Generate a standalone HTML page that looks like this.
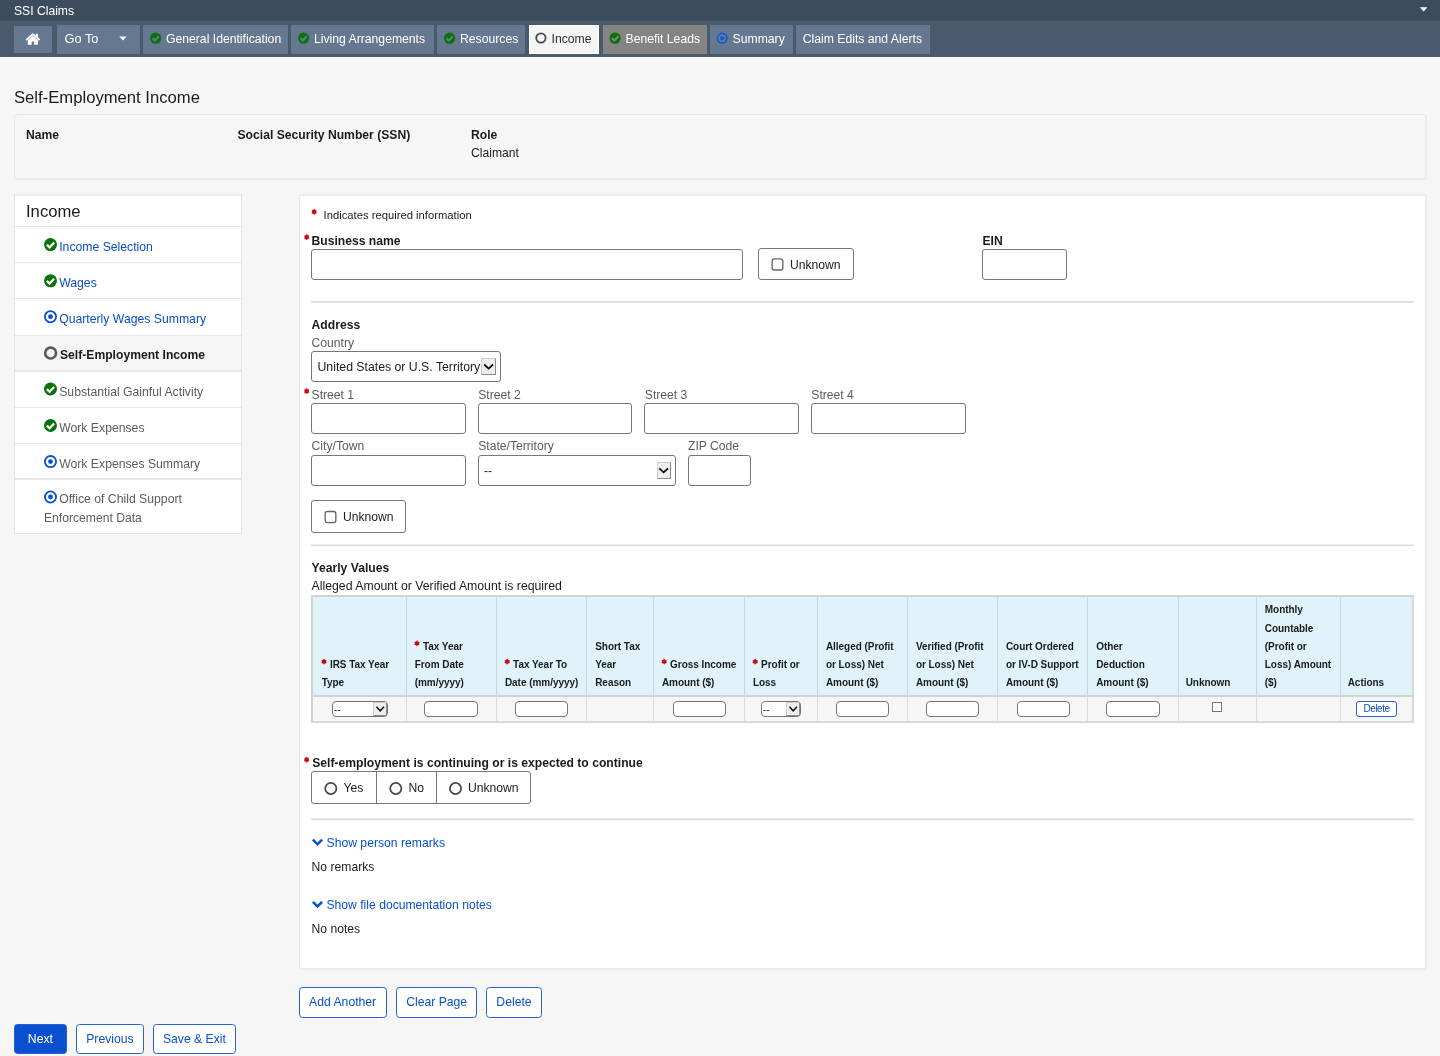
<!DOCTYPE html>
<html lang="en"><head><meta charset="utf-8"><title>SSI Claims - Self-Employment Income</title>
<style>
*{box-sizing:border-box}
html,body{margin:0;padding:0}
body{width:1440px;height:1056px;overflow:hidden;background:#f6f6f6;font-family:"Liberation Sans",Arial,sans-serif;font-size:12.15px;color:#1b1b1b;position:relative}
.a{position:absolute}
.t{position:absolute;white-space:nowrap}
#w{position:absolute;left:0;top:0;width:1440px;height:1056px;will-change:transform}
</style></head><body><div id="w">
<div class="a " style="left:0px;top:0px;width:1440px;height:21px;background:#3d4c5d"></div>
<div class="t" style="left:14px;top:1px;font-size:12.15px;line-height:20px;font-weight:400;color:#fff;">SSI Claims</div>
<svg class="a" style="left:1419px;top:7px" width="10" height="6" viewBox="0 0 10 6"><g transform="translate(0.60 0.00) scale(0.8000 0.7667)"><path d="M0.3 0.3 H9.7 L5 5.8 Z" fill="#fff"/></g></svg>
<div class="a " style="left:0px;top:21px;width:1440px;height:36px;background:#495a6c"></div>
<div class="a " style="left:14px;top:25.9px;width:38.2px;height:27px;background:#66788f"></div>
<svg class="a" style="left:25px;top:33px" width="17" height="13" viewBox="0 0 17 13"><g transform="translate(0.60 0.10) scale(0.5214 0.5318)"><path d="M14 0 L0 11.6 L2.2 14.4 L14 4.6 L25.8 14.4 L28 11.6 L23.6 7.9 V1.4 H19.4 V4.5 Z" fill="#fff"/><path d="M14 5.5 L4.2 13.6 V22 H11.6 V15.6 H16.4 V22 H23.8 V13.6 Z" fill="#fff"/></g></svg>
<div class="a " style="left:57px;top:25px;width:83px;height:29px;background:#66788f"></div>
<div class="t" style="left:64.6px;top:29px;font-size:12.75px;line-height:20px;font-weight:400;color:#fff;">Go To</div>
<svg class="a" style="left:118px;top:36px" width="10" height="6" viewBox="0 0 10 6"><g transform="translate(0.90 0.20) scale(0.8000 0.7500)"><path d="M0.3 0.3 H9.7 L5 5.8 Z" fill="#fff"/></g></svg>
<div class="a " style="left:143px;top:25px;width:145.3px;height:29px;background:#66788f"></div>
<svg class="a" style="left:150px;top:32px" width="13" height="13" viewBox="0 0 13 13"><g transform="translate(0.00 0.60) scale(0.5600 0.5600)"><circle cx="10" cy="10" r="10" fill="#0a720a"/><path d="M4.4 10.2 L8.5 14.2 L15.6 6.9" fill="none" stroke="#66788f" stroke-width="3.5"/></g></svg>
<div class="t" style="left:166px;top:29px;font-size:12.2px;line-height:20px;font-weight:400;color:#fff;">General Identification</div>
<div class="a " style="left:291px;top:25px;width:143px;height:29px;background:#66788f"></div>
<svg class="a" style="left:298px;top:32px" width="13" height="13" viewBox="0 0 13 13"><g transform="translate(0.00 0.60) scale(0.5600 0.5600)"><circle cx="10" cy="10" r="10" fill="#0a720a"/><path d="M4.4 10.2 L8.5 14.2 L15.6 6.9" fill="none" stroke="#66788f" stroke-width="3.5"/></g></svg>
<div class="t" style="left:314px;top:29px;font-size:12.2px;line-height:20px;font-weight:400;color:#fff;">Living Arrangements</div>
<div class="a " style="left:437px;top:25px;width:88px;height:29px;background:#66788f"></div>
<svg class="a" style="left:444px;top:32px" width="13" height="13" viewBox="0 0 13 13"><g transform="translate(0.00 0.60) scale(0.5600 0.5600)"><circle cx="10" cy="10" r="10" fill="#0a720a"/><path d="M4.4 10.2 L8.5 14.2 L15.6 6.9" fill="none" stroke="#66788f" stroke-width="3.5"/></g></svg>
<div class="t" style="left:460px;top:29px;font-size:12.2px;line-height:20px;font-weight:400;color:#fff;">Resources</div>
<div class="a " style="left:528.5px;top:25px;width:70.3px;height:29px;background:#f5f5f5;border:1.5px solid #fff"></div>
<svg class="a" style="left:535px;top:32px" width="13" height="13" viewBox="0 0 13 13"><g transform="translate(0.30 0.40) scale(0.5600 0.5600)"><circle cx="10" cy="10" r="8.35" fill="none" stroke="#4c4c4c" stroke-width="3.3"/></g></svg>
<div class="t" style="left:551.5px;top:29px;font-size:12.2px;line-height:20px;font-weight:400;color:#2e2e2e;">Income</div>
<div class="a " style="left:602.5px;top:25px;width:104.2px;height:29px;background:#848484"></div>
<svg class="a" style="left:609px;top:32px" width="13" height="13" viewBox="0 0 13 13"><g transform="translate(0.50 0.60) scale(0.5600 0.5600)"><circle cx="10" cy="10" r="10" fill="#0a720a"/><path d="M4.4 10.2 L8.5 14.2 L15.6 6.9" fill="none" stroke="#848484" stroke-width="3.5"/></g></svg>
<div class="t" style="left:625.5px;top:29px;font-size:12.2px;line-height:20px;font-weight:400;color:#fff;">Benefit Leads</div>
<div class="a " style="left:709.6px;top:25px;width:83.1px;height:29px;background:#66788f"></div>
<svg class="a" style="left:716px;top:32px" width="13" height="13" viewBox="0 0 13 13"><g transform="translate(0.60 0.60) scale(0.5600 0.5600)"><circle cx="10" cy="10" r="8.6" fill="#66788f" stroke="#0b5be0" stroke-width="2.8"/><circle cx="10" cy="10" r="3.7" fill="#0b5be0"/></g></svg>
<div class="t" style="left:732.6px;top:29px;font-size:12.2px;line-height:20px;font-weight:400;color:#fff;">Summary</div>
<div class="a " style="left:795.8px;top:25px;width:134.2px;height:29px;background:#66788f"></div>
<div class="t" style="left:802.8px;top:29px;font-size:12.2px;line-height:20px;font-weight:400;color:#fff;">Claim Edits and Alerts</div>
<div class="t" style="left:14px;top:88px;font-size:16.65px;line-height:20px;font-weight:400;color:#1b1b1b;">Self-Employment Income</div>
<div class="a " style="left:14px;top:114px;width:1413px;height:66px;border:solid;border-width:1px 2px 2px 1px;border-color:#e5e5e5 #ececec #ebebeb #e7e7e7;border-radius:3px;background:#f6f6f6"></div>
<div class="t" style="left:26px;top:125px;font-size:12.15px;line-height:20px;font-weight:700;color:#1b1b1b;">Name</div>
<div class="t" style="left:237.5px;top:125px;font-size:12.15px;line-height:20px;font-weight:700;color:#1b1b1b;">Social Security Number (SSN)</div>
<div class="t" style="left:471px;top:125px;font-size:12.15px;line-height:20px;font-weight:700;color:#1b1b1b;">Role</div>
<div class="t" style="left:471px;top:143px;font-size:12.15px;line-height:20px;font-weight:400;color:#1b1b1b;">Claimant</div>
<div class="a " style="left:14px;top:194px;width:228px;height:340px;border:solid;border-width:2px 1px 1px 1px;border-color:#ececec #e6e6e6 #e6e6e6 #e6e6e6;background:#fff"></div>
<div class="t" style="left:26px;top:202px;font-size:16.65px;line-height:20px;font-weight:400;color:#1b1b1b;">Income</div>
<div class="a " style="left:15px;top:335.5px;width:226px;height:35.5px;background:#f5f5f5"></div>
<div class="a " style="left:15px;top:225.65px;width:226px;height:1.5px;background:#e6e6e6"></div>
<div class="a " style="left:15px;top:261.85px;width:226px;height:1.5px;background:#e6e6e6"></div>
<div class="a " style="left:15px;top:297.75px;width:226px;height:1.5px;background:#e6e6e6"></div>
<div class="a " style="left:15px;top:334.55px;width:226px;height:1.5px;background:#e6e6e6"></div>
<div class="a " style="left:15px;top:370.05px;width:226px;height:1.5px;background:#e6e6e6"></div>
<div class="a " style="left:15px;top:406.55px;width:226px;height:1.5px;background:#e6e6e6"></div>
<div class="a " style="left:15px;top:442.65px;width:226px;height:1.5px;background:#e6e6e6"></div>
<div class="a " style="left:15px;top:478.05px;width:226px;height:1.5px;background:#e6e6e6"></div>
<svg class="a" style="left:44px;top:238px" width="14" height="15" viewBox="0 0 14 15"><g transform="translate(0.00 0.10) scale(0.6500 0.6500)"><circle cx="10" cy="10" r="10" fill="#0a720a"/><path d="M4.4 10.2 L8.5 14.2 L15.6 6.9" fill="none" stroke="#fff" stroke-width="3.5"/></g></svg>
<div class="t" style="left:59.2px;top:237px;font-size:12.22px;line-height:20px;font-weight:400;color:#0a4fcf;">Income Selection</div>
<svg class="a" style="left:44px;top:274px" width="14" height="15" viewBox="0 0 14 15"><g transform="translate(0.00 0.30) scale(0.6500 0.6500)"><circle cx="10" cy="10" r="10" fill="#0a720a"/><path d="M4.4 10.2 L8.5 14.2 L15.6 6.9" fill="none" stroke="#fff" stroke-width="3.5"/></g></svg>
<div class="t" style="left:59.2px;top:273px;font-size:12.22px;line-height:20px;font-weight:400;color:#0a4fcf;">Wages</div>
<svg class="a" style="left:44px;top:310px" width="14" height="15" viewBox="0 0 14 15"><g transform="translate(0.00 0.20) scale(0.6500 0.6500)"><circle cx="10" cy="10" r="8.6" fill="#fff" stroke="#0a4fcf" stroke-width="2.8"/><circle cx="10" cy="10" r="3.7" fill="#0a4fcf"/></g></svg>
<div class="t" style="left:59.2px;top:309px;font-size:12.22px;line-height:20px;font-weight:400;color:#0a4fcf;">Quarterly Wages Summary</div>
<svg class="a" style="left:43px;top:346px" width="16" height="15" viewBox="0 0 16 15"><g transform="translate(0.85 0.35) scale(0.6750 0.6750)"><circle cx="10" cy="10" r="8.05" fill="none" stroke="#585858" stroke-width="3.9"/></g></svg>
<div class="t" style="left:60px;top:345px;font-size:12.15px;line-height:20px;font-weight:700;color:#1b1b1b;">Self-Employment Income</div>
<svg class="a" style="left:44px;top:382px" width="14" height="15" viewBox="0 0 14 15"><g transform="translate(0.00 0.50) scale(0.6500 0.6500)"><circle cx="10" cy="10" r="10" fill="#0a720a"/><path d="M4.4 10.2 L8.5 14.2 L15.6 6.9" fill="none" stroke="#fff" stroke-width="3.5"/></g></svg>
<div class="t" style="left:59.2px;top:382px;font-size:12.22px;line-height:20px;font-weight:400;color:#5c5c5c;">Substantial Gainful Activity</div>
<svg class="a" style="left:44px;top:419px" width="14" height="14" viewBox="0 0 14 14"><g transform="translate(0.00 0.00) scale(0.6500 0.6500)"><circle cx="10" cy="10" r="10" fill="#0a720a"/><path d="M4.4 10.2 L8.5 14.2 L15.6 6.9" fill="none" stroke="#fff" stroke-width="3.5"/></g></svg>
<div class="t" style="left:59.2px;top:418px;font-size:12.22px;line-height:20px;font-weight:400;color:#5c5c5c;">Work Expenses</div>
<svg class="a" style="left:44px;top:455px" width="14" height="15" viewBox="0 0 14 15"><g transform="translate(0.00 0.10) scale(0.6500 0.6500)"><circle cx="10" cy="10" r="8.6" fill="#fff" stroke="#0a4fcf" stroke-width="2.8"/><circle cx="10" cy="10" r="3.7" fill="#0a4fcf"/></g></svg>
<div class="t" style="left:59.2px;top:454px;font-size:12.22px;line-height:20px;font-weight:400;color:#5c5c5c;">Work Expenses Summary</div>
<svg class="a" style="left:44px;top:490px" width="14" height="15" viewBox="0 0 14 15"><g transform="translate(0.00 0.50) scale(0.6500 0.6500)"><circle cx="10" cy="10" r="8.6" fill="#fff" stroke="#0a4fcf" stroke-width="2.8"/><circle cx="10" cy="10" r="3.7" fill="#0a4fcf"/></g></svg>
<div class="t" style="left:59.2px;top:489px;font-size:12.22px;line-height:20px;font-weight:400;color:#5c5c5c;">Office of Child Support</div>
<div class="t" style="left:44px;top:508px;font-size:12.15px;line-height:20px;font-weight:400;color:#5c5c5c;">Enforcement Data</div>
<div class="a " style="left:299px;top:194px;width:1128px;height:776px;border:solid;border-width:2px 2px 2px 1px;border-color:#ececec #ececec #ececec #e6e6e6;border-radius:3px;background:#fff"></div>
<svg class="a" style="left:311px;top:209px" width="7" height="7" viewBox="0 0 7 7"><g transform="translate(0.40 0.00) scale(0.5500 0.5800)"><polygon points="5.00,0.00 6.78,1.93 9.33,2.50 8.55,5.00 9.33,7.50 6.78,8.07 5.00,10.00 3.23,8.07 0.67,7.50 1.45,5.00 0.67,2.50 3.22,1.93" fill="#cc0612" stroke="#cc0612" stroke-width="0.5" stroke-linejoin="round"/></g></svg>
<div class="t" style="left:323.5px;top:205px;font-size:11.25px;line-height:20px;font-weight:400;color:#1b1b1b;">Indicates required information</div>
<svg class="a" style="left:304px;top:234px" width="7" height="7" viewBox="0 0 7 7"><g transform="translate(0.00 0.20) scale(0.5500 0.5800)"><polygon points="5.00,0.00 6.78,1.93 9.33,2.50 8.55,5.00 9.33,7.50 6.78,8.07 5.00,10.00 3.23,8.07 0.67,7.50 1.45,5.00 0.67,2.50 3.22,1.93" fill="#cc0612" stroke="#cc0612" stroke-width="0.5" stroke-linejoin="round"/></g></svg>
<div class="t" style="left:311.5px;top:231px;font-size:12.15px;line-height:20px;font-weight:700;color:#1b1b1b;">Business name</div>
<div class="a " style="left:311px;top:249px;width:432px;height:31px;border:1px solid #767676;border-radius:3px;background:#fff"></div>
<div class="a " style="left:758px;top:248px;width:96px;height:32px;border:1px solid #767676;border-radius:3px;background:#fff"></div>
<svg class="a" style="left:771px;top:257px" width="14" height="15" viewBox="0 0 14 15"><g transform="translate(0.25 0.95) scale(1.0000 1.0000)"><rect x="0.9" y="0.9" width="10.7" height="11.1" rx="2.3" fill="#fff" stroke="#666" stroke-width="1.35"/></g></svg>
<div class="t" style="left:790px;top:255px;font-size:12.15px;line-height:20px;font-weight:400;color:#1b1b1b;">Unknown</div>
<div class="t" style="left:982.5px;top:231px;font-size:12.15px;line-height:20px;font-weight:700;color:#1b1b1b;">EIN</div>
<div class="a " style="left:982px;top:249px;width:85px;height:31px;border:1px solid #767676;border-radius:3px;background:#fff"></div>
<div class="a " style="left:311px;top:301px;width:1103px;height:2px;background:#e0e0e0"></div>
<div class="t" style="left:311.6px;top:315px;font-size:12.15px;line-height:20px;font-weight:700;color:#1b1b1b;">Address</div>
<div class="t" style="left:311.6px;top:333px;font-size:12.15px;line-height:20px;font-weight:400;color:#5c5c5c;">Country</div>
<div class="a " style="left:311px;top:351px;width:190px;height:30.5px;border:1px solid #767676;border-radius:3px;background:#fff"></div>
<div class="t" style="left:317.5px;top:357px;font-size:12.27px;line-height:20px;font-weight:400;color:#1b1b1b;">United States or U.S. Territory</div>
<div class="a" style="left:481.4px;top:358.2px;width:14.4px;height:16.7px;border:1px solid;border-color:#cdcdcd #8c8c8c #8c8c8c #cdcdcd;background:#eee"></div><svg class="a" style="left:481px;top:358px" width="16" height="18" viewBox="0 0 16 18"><g transform="translate(0.40 0.20) scale(1.0000 1.0000)"><path d="M2.8 6.3 L7.2 10.4 L11.6 6.3" fill="none" stroke="#0a0a0a" stroke-width="1.75"/></g></svg>
<svg class="a" style="left:303px;top:388px" width="8" height="7" viewBox="0 0 8 7"><g transform="translate(0.90 0.20) scale(0.5500 0.5800)"><polygon points="5.00,0.00 6.78,1.93 9.33,2.50 8.55,5.00 9.33,7.50 6.78,8.07 5.00,10.00 3.23,8.07 0.67,7.50 1.45,5.00 0.67,2.50 3.22,1.93" fill="#cc0612" stroke="#cc0612" stroke-width="0.5" stroke-linejoin="round"/></g></svg>
<div class="t" style="left:311.6px;top:385px;font-size:12.15px;line-height:20px;font-weight:400;color:#5c5c5c;">Street 1</div>
<div class="a " style="left:311px;top:403.3px;width:154.8px;height:30.4px;border:1px solid #767676;border-radius:3px;background:#fff"></div>
<div class="t" style="left:478.20000000000005px;top:385px;font-size:12.15px;line-height:20px;font-weight:400;color:#5c5c5c;">Street 2</div>
<div class="a " style="left:477.6px;top:403.3px;width:154.8px;height:30.4px;border:1px solid #767676;border-radius:3px;background:#fff"></div>
<div class="t" style="left:644.8000000000001px;top:385px;font-size:12.15px;line-height:20px;font-weight:400;color:#5c5c5c;">Street 3</div>
<div class="a " style="left:644.2px;top:403.3px;width:154.8px;height:30.4px;border:1px solid #767676;border-radius:3px;background:#fff"></div>
<div class="t" style="left:811.3000000000001px;top:385px;font-size:12.15px;line-height:20px;font-weight:400;color:#5c5c5c;">Street 4</div>
<div class="a " style="left:810.7px;top:403.3px;width:155.3px;height:30.4px;border:1px solid #767676;border-radius:3px;background:#fff"></div>
<div class="t" style="left:311.6px;top:436px;font-size:12.15px;line-height:20px;font-weight:400;color:#5c5c5c;">City/Town</div>
<div class="a " style="left:311px;top:455px;width:154.8px;height:30.6px;border:1px solid #767676;border-radius:3px;background:#fff"></div>
<div class="t" style="left:478.2px;top:436px;font-size:12.15px;line-height:20px;font-weight:400;color:#5c5c5c;">State/Territory</div>
<div class="a " style="left:477.6px;top:455px;width:198px;height:30.6px;border:1px solid #767676;border-radius:3px;background:#fff"></div>
<div class="t" style="left:484px;top:461px;font-size:12.15px;line-height:20px;font-weight:400;color:#1b1b1b;">--</div>
<div class="a" style="left:656.5px;top:462px;width:14.3px;height:16.7px;border:1px solid;border-color:#cdcdcd #8c8c8c #8c8c8c #cdcdcd;background:#eee"></div><svg class="a" style="left:656px;top:462px" width="16" height="18" viewBox="0 0 16 18"><g transform="translate(0.50 0.00) scale(0.9931 1.0000)"><path d="M2.8 6.3 L7.2 10.4 L11.6 6.3" fill="none" stroke="#0a0a0a" stroke-width="1.75"/></g></svg>
<div class="t" style="left:688px;top:436px;font-size:12.15px;line-height:20px;font-weight:400;color:#5c5c5c;">ZIP Code</div>
<div class="a " style="left:687.5px;top:455px;width:63.5px;height:30.6px;border:1px solid #767676;border-radius:3px;background:#fff"></div>
<div class="a " style="left:311px;top:500px;width:95px;height:32.5px;border:1px solid #767676;border-radius:3px;background:#fff"></div>
<svg class="a" style="left:324px;top:510px" width="14" height="15" viewBox="0 0 14 15"><g transform="translate(0.25 0.55) scale(1.0000 1.0000)"><rect x="0.9" y="0.9" width="10.7" height="11.1" rx="2.3" fill="#fff" stroke="#666" stroke-width="1.35"/></g></svg>
<div class="t" style="left:343px;top:507px;font-size:12.15px;line-height:20px;font-weight:400;color:#1b1b1b;">Unknown</div>
<div class="a " style="left:311px;top:544px;width:1103px;height:3px;background:linear-gradient(#f0f0f0 0 1px,#dcdcdc 1px 2px,#f7f7f7 2px 3px)"></div>
<div class="t" style="left:311.6px;top:558px;font-size:12.15px;line-height:20px;font-weight:700;color:#1b1b1b;">Yearly Values</div>
<div class="t" style="left:311.6px;top:576px;font-size:12.27px;line-height:20px;font-weight:400;color:#1b1b1b;">Alleged Amount or Verified Amount is required</div>
<div class="a" style="left:311.3px;top:595px;width:1102.3px;height:99.6px;background:#e0f3fb"></div>
<div class="a" style="left:311.3px;top:694.6px;width:1102.3px;height:27.9px;background:#f6f6f6"></div>
<div class="a" style="left:311.3px;top:595px;width:1102.3px;height:127.5px;border:2px solid;border-color:#d2d2d2 #d9d9d9 #d9d9d9 #d2d2d2"></div>
<div class="a" style="left:311.3px;top:694.6px;width:1102.3px;height:2.4px;background:#d2d2d2"></div>
<div class="a" style="left:406px;top:597px;width:1px;height:97.6px;background:#c9d6dc"></div>
<div class="a" style="left:406px;top:697.0px;width:1px;height:23.5px;background:#dadada"></div>
<div class="a" style="left:496px;top:597px;width:1px;height:97.6px;background:#c9d6dc"></div>
<div class="a" style="left:496px;top:697.0px;width:1px;height:23.5px;background:#dadada"></div>
<div class="a" style="left:586px;top:597px;width:1px;height:97.6px;background:#c9d6dc"></div>
<div class="a" style="left:586px;top:697.0px;width:1px;height:23.5px;background:#dadada"></div>
<div class="a" style="left:653px;top:597px;width:1px;height:97.6px;background:#c9d6dc"></div>
<div class="a" style="left:653px;top:697.0px;width:1px;height:23.5px;background:#dadada"></div>
<div class="a" style="left:744px;top:597px;width:1px;height:97.6px;background:#c9d6dc"></div>
<div class="a" style="left:744px;top:697.0px;width:1px;height:23.5px;background:#dadada"></div>
<div class="a" style="left:817px;top:597px;width:1px;height:97.6px;background:#c9d6dc"></div>
<div class="a" style="left:817px;top:697.0px;width:1px;height:23.5px;background:#dadada"></div>
<div class="a" style="left:907px;top:597px;width:1px;height:97.6px;background:#c9d6dc"></div>
<div class="a" style="left:907px;top:697.0px;width:1px;height:23.5px;background:#dadada"></div>
<div class="a" style="left:997px;top:597px;width:1px;height:97.6px;background:#c9d6dc"></div>
<div class="a" style="left:997px;top:697.0px;width:1px;height:23.5px;background:#dadada"></div>
<div class="a" style="left:1087px;top:597px;width:1px;height:97.6px;background:#c9d6dc"></div>
<div class="a" style="left:1087px;top:697.0px;width:1px;height:23.5px;background:#dadada"></div>
<div class="a" style="left:1178px;top:597px;width:1px;height:97.6px;background:#c9d6dc"></div>
<div class="a" style="left:1178px;top:697.0px;width:1px;height:23.5px;background:#dadada"></div>
<div class="a" style="left:1256px;top:597px;width:1px;height:97.6px;background:#c9d6dc"></div>
<div class="a" style="left:1256px;top:697.0px;width:1px;height:23.5px;background:#dadada"></div>
<div class="a" style="left:1340px;top:597px;width:1px;height:97.6px;background:#c9d6dc"></div>
<div class="a" style="left:1340px;top:697.0px;width:1px;height:23.5px;background:#dadada"></div>
<svg class="a" style="left:321px;top:658px" width="7" height="8" viewBox="0 0 7 8"><g transform="translate(0.20 0.85) scale(0.5600 0.5600)"><polygon points="5.00,0.00 6.78,1.93 9.33,2.50 8.55,5.00 9.33,7.50 6.78,8.07 5.00,10.00 3.23,8.07 0.67,7.50 1.45,5.00 0.67,2.50 3.22,1.93" fill="#cc0612" stroke="#cc0612" stroke-width="0.5" stroke-linejoin="round"/></g></svg>
<div class="t" style="left:329.90px;top:655px;font-size:10px;line-height:20px;font-weight:700;color:#1b1b1b;letter-spacing:-0.04px">IRS Tax Year</div>
<div class="t" style="left:321.70px;top:673px;font-size:10px;line-height:20px;font-weight:700;color:#1b1b1b;letter-spacing:-0.04px">Type</div>
<svg class="a" style="left:414px;top:640px" width="7" height="8" viewBox="0 0 7 8"><g transform="translate(0.20 0.60) scale(0.5600 0.5600)"><polygon points="5.00,0.00 6.78,1.93 9.33,2.50 8.55,5.00 9.33,7.50 6.78,8.07 5.00,10.00 3.23,8.07 0.67,7.50 1.45,5.00 0.67,2.50 3.22,1.93" fill="#cc0612" stroke="#cc0612" stroke-width="0.5" stroke-linejoin="round"/></g></svg>
<div class="t" style="left:422.90px;top:637px;font-size:10px;line-height:20px;font-weight:700;color:#1b1b1b;letter-spacing:-0.04px">Tax Year</div>
<div class="t" style="left:414.70px;top:655px;font-size:10px;line-height:20px;font-weight:700;color:#1b1b1b;letter-spacing:-0.04px">From Date</div>
<div class="t" style="left:414.70px;top:673px;font-size:10px;line-height:20px;font-weight:700;color:#1b1b1b;letter-spacing:-0.04px">(mm/yyyy)</div>
<svg class="a" style="left:504px;top:658px" width="7" height="8" viewBox="0 0 7 8"><g transform="translate(0.40 0.85) scale(0.5600 0.5600)"><polygon points="5.00,0.00 6.78,1.93 9.33,2.50 8.55,5.00 9.33,7.50 6.78,8.07 5.00,10.00 3.23,8.07 0.67,7.50 1.45,5.00 0.67,2.50 3.22,1.93" fill="#cc0612" stroke="#cc0612" stroke-width="0.5" stroke-linejoin="round"/></g></svg>
<div class="t" style="left:513.10px;top:655px;font-size:10px;line-height:20px;font-weight:700;color:#1b1b1b;letter-spacing:-0.04px">Tax Year To</div>
<div class="t" style="left:504.90px;top:673px;font-size:10px;line-height:20px;font-weight:700;color:#1b1b1b;letter-spacing:-0.04px">Date (mm/yyyy)</div>
<div class="t" style="left:595.20px;top:637px;font-size:10px;line-height:20px;font-weight:700;color:#1b1b1b;letter-spacing:-0.04px">Short Tax</div>
<div class="t" style="left:595.20px;top:655px;font-size:10px;line-height:20px;font-weight:700;color:#1b1b1b;letter-spacing:-0.04px">Year</div>
<div class="t" style="left:595.20px;top:673px;font-size:10px;line-height:20px;font-weight:700;color:#1b1b1b;letter-spacing:-0.04px">Reason</div>
<svg class="a" style="left:661px;top:658px" width="7" height="8" viewBox="0 0 7 8"><g transform="translate(0.40 0.85) scale(0.5600 0.5600)"><polygon points="5.00,0.00 6.78,1.93 9.33,2.50 8.55,5.00 9.33,7.50 6.78,8.07 5.00,10.00 3.23,8.07 0.67,7.50 1.45,5.00 0.67,2.50 3.22,1.93" fill="#cc0612" stroke="#cc0612" stroke-width="0.5" stroke-linejoin="round"/></g></svg>
<div class="t" style="left:670.10px;top:655px;font-size:10px;line-height:20px;font-weight:700;color:#1b1b1b;letter-spacing:-0.04px">Gross Income</div>
<div class="t" style="left:661.90px;top:673px;font-size:10px;line-height:20px;font-weight:700;color:#1b1b1b;letter-spacing:-0.04px">Amount ($)</div>
<svg class="a" style="left:752px;top:658px" width="7" height="8" viewBox="0 0 7 8"><g transform="translate(0.40 0.85) scale(0.5600 0.5600)"><polygon points="5.00,0.00 6.78,1.93 9.33,2.50 8.55,5.00 9.33,7.50 6.78,8.07 5.00,10.00 3.23,8.07 0.67,7.50 1.45,5.00 0.67,2.50 3.22,1.93" fill="#cc0612" stroke="#cc0612" stroke-width="0.5" stroke-linejoin="round"/></g></svg>
<div class="t" style="left:761.10px;top:655px;font-size:10px;line-height:20px;font-weight:700;color:#1b1b1b;letter-spacing:-0.04px">Profit or</div>
<div class="t" style="left:752.90px;top:673px;font-size:10px;line-height:20px;font-weight:700;color:#1b1b1b;letter-spacing:-0.04px">Loss</div>
<div class="t" style="left:825.90px;top:637px;font-size:10px;line-height:20px;font-weight:700;color:#1b1b1b;letter-spacing:-0.04px">Alleged (Profit</div>
<div class="t" style="left:825.90px;top:655px;font-size:10px;line-height:20px;font-weight:700;color:#1b1b1b;letter-spacing:-0.04px">or Loss) Net</div>
<div class="t" style="left:825.90px;top:673px;font-size:10px;line-height:20px;font-weight:700;color:#1b1b1b;letter-spacing:-0.04px">Amount ($)</div>
<div class="t" style="left:915.90px;top:637px;font-size:10px;line-height:20px;font-weight:700;color:#1b1b1b;letter-spacing:-0.04px">Verified (Profit</div>
<div class="t" style="left:915.90px;top:655px;font-size:10px;line-height:20px;font-weight:700;color:#1b1b1b;letter-spacing:-0.04px">or Loss) Net</div>
<div class="t" style="left:915.90px;top:673px;font-size:10px;line-height:20px;font-weight:700;color:#1b1b1b;letter-spacing:-0.04px">Amount ($)</div>
<div class="t" style="left:1005.90px;top:637px;font-size:10px;line-height:20px;font-weight:700;color:#1b1b1b;letter-spacing:-0.04px">Court Ordered</div>
<div class="t" style="left:1005.90px;top:655px;font-size:10px;line-height:20px;font-weight:700;color:#1b1b1b;letter-spacing:-0.04px">or IV-D Support</div>
<div class="t" style="left:1005.90px;top:673px;font-size:10px;line-height:20px;font-weight:700;color:#1b1b1b;letter-spacing:-0.04px">Amount ($)</div>
<div class="t" style="left:1096.20px;top:637px;font-size:10px;line-height:20px;font-weight:700;color:#1b1b1b;letter-spacing:-0.04px">Other</div>
<div class="t" style="left:1096.20px;top:655px;font-size:10px;line-height:20px;font-weight:700;color:#1b1b1b;letter-spacing:-0.04px">Deduction</div>
<div class="t" style="left:1096.20px;top:673px;font-size:10px;line-height:20px;font-weight:700;color:#1b1b1b;letter-spacing:-0.04px">Amount ($)</div>
<div class="t" style="left:1185.70px;top:673px;font-size:10px;line-height:20px;font-weight:700;color:#1b1b1b;letter-spacing:-0.04px">Unknown</div>
<div class="t" style="left:1264.80px;top:600px;font-size:10px;line-height:20px;font-weight:700;color:#1b1b1b;letter-spacing:-0.04px">Monthly</div>
<div class="t" style="left:1264.80px;top:619px;font-size:10px;line-height:20px;font-weight:700;color:#1b1b1b;letter-spacing:-0.04px">Countable</div>
<div class="t" style="left:1264.80px;top:637px;font-size:10px;line-height:20px;font-weight:700;color:#1b1b1b;letter-spacing:-0.04px">(Profit or</div>
<div class="t" style="left:1264.80px;top:655px;font-size:10px;line-height:20px;font-weight:700;color:#1b1b1b;letter-spacing:-0.04px">Loss) Amount</div>
<div class="t" style="left:1264.80px;top:673px;font-size:10px;line-height:20px;font-weight:700;color:#1b1b1b;letter-spacing:-0.04px">($)</div>
<div class="t" style="left:1347.70px;top:673px;font-size:10px;line-height:20px;font-weight:700;color:#1b1b1b;letter-spacing:-0.04px">Actions</div>
<div class="a" style="left:331.5px;top:701px;width:56px;height:15.6px;border:1px solid #767676;border-radius:4px;background:#fff"></div>
<div class="t" style="left:333.70px;top:699px;font-size:10.5px;line-height:20px;font-weight:400;color:#1b1b1b;letter-spacing:-0.04px">--</div>
<div class="a" style="left:373.4px;top:702px;width:13.6px;height:13.6px;border:1px solid;border-color:#cdcdcd #8c8c8c #8c8c8c #cdcdcd;background:#eee"></div><svg class="a" style="left:373px;top:702px" width="15" height="15" viewBox="0 0 15 15"><g transform="translate(0.40 0.00) scale(1.0000 1.0303)"><path d="M3 4.6 L6.8 8.6 L10.6 4.6" fill="none" stroke="#111" stroke-width="1.5"/></g></svg>
<div class="a" style="left:424.3px;top:701px;width:54.2px;height:15.6px;border:1px solid #767676;border-radius:4px;background:#fff"></div>
<div class="a" style="left:515px;top:701px;width:53.3px;height:15.6px;border:1px solid #767676;border-radius:4px;background:#fff"></div>
<div class="a" style="left:672.5px;top:701px;width:53.3px;height:15.6px;border:1px solid #767676;border-radius:4px;background:#fff"></div>
<div class="a" style="left:836.3px;top:701px;width:53.0px;height:15.6px;border:1px solid #767676;border-radius:4px;background:#fff"></div>
<div class="a" style="left:925.8px;top:701px;width:53.2px;height:15.6px;border:1px solid #767676;border-radius:4px;background:#fff"></div>
<div class="a" style="left:1016.6px;top:701px;width:53.4px;height:15.6px;border:1px solid #767676;border-radius:4px;background:#fff"></div>
<div class="a" style="left:1106px;top:701px;width:53.6px;height:15.6px;border:1px solid #767676;border-radius:4px;background:#fff"></div>
<div class="a" style="left:760.5px;top:701px;width:40px;height:15.6px;border:1px solid #767676;border-radius:4px;background:#fff"></div>
<div class="t" style="left:762.70px;top:699px;font-size:10.5px;line-height:20px;font-weight:400;color:#1b1b1b;letter-spacing:-0.04px">--</div>
<div class="a" style="left:786.4px;top:702px;width:13.6px;height:13.6px;border:1px solid;border-color:#cdcdcd #8c8c8c #8c8c8c #cdcdcd;background:#eee"></div><svg class="a" style="left:786px;top:702px" width="15" height="15" viewBox="0 0 15 15"><g transform="translate(0.40 0.00) scale(1.0000 1.0303)"><path d="M3 4.6 L6.8 8.6 L10.6 4.6" fill="none" stroke="#111" stroke-width="1.5"/></g></svg>
<div class="a" style="left:1212.4px;top:702.4px;width:10px;height:10px;border:1px solid #777;background:#fff"></div>
<div class="a" style="left:1356.3px;top:701px;width:40.5px;height:15.7px;border:1px solid #2463d6;border-radius:3px;background:#fff;color:#0a4fcf;font-size:10px;letter-spacing:-0.5px;line-height:14px;text-align:center">Delete</div>
<svg class="a" style="left:303px;top:756px" width="8" height="8" viewBox="0 0 8 8"><g transform="translate(0.90 0.80) scale(0.5500 0.5800)"><polygon points="5.00,0.00 6.78,1.93 9.33,2.50 8.55,5.00 9.33,7.50 6.78,8.07 5.00,10.00 3.23,8.07 0.67,7.50 1.45,5.00 0.67,2.50 3.22,1.93" fill="#cc0612" stroke="#cc0612" stroke-width="0.5" stroke-linejoin="round"/></g></svg>
<div class="t" style="left:312.2px;top:753px;font-size:12.15px;line-height:20px;font-weight:700;color:#1b1b1b;">Self-employment is continuing or is expected to continue</div>
<div class="a " style="left:311px;top:771px;width:220px;height:32.5px;border:1px solid #767676;border-radius:3px;background:#fff"></div>
<div class="a " style="left:376px;top:772px;width:1px;height:31px;background:#767676"></div>
<div class="a " style="left:436px;top:772px;width:1px;height:31px;background:#767676"></div>
<svg class="a" style="left:324px;top:782px" width="15" height="14" viewBox="0 0 15 14"><g transform="translate(0.30 0.00) scale(0.6500 0.6500)"><circle cx="10" cy="10" r="8.65" fill="#fff" stroke="#484848" stroke-width="2.7"/></g></svg>
<div class="t" style="left:343.5px;top:778px;font-size:12.15px;line-height:20px;font-weight:400;color:#1b1b1b;">Yes</div>
<svg class="a" style="left:389px;top:782px" width="15" height="14" viewBox="0 0 15 14"><g transform="translate(0.30 0.00) scale(0.6500 0.6500)"><circle cx="10" cy="10" r="8.65" fill="#fff" stroke="#484848" stroke-width="2.7"/></g></svg>
<div class="t" style="left:408.5px;top:778px;font-size:12.15px;line-height:20px;font-weight:400;color:#1b1b1b;">No</div>
<svg class="a" style="left:449px;top:782px" width="14" height="14" viewBox="0 0 14 14"><g transform="translate(0.00 0.00) scale(0.6500 0.6500)"><circle cx="10" cy="10" r="8.65" fill="#fff" stroke="#484848" stroke-width="2.7"/></g></svg>
<div class="t" style="left:468px;top:778px;font-size:12.15px;line-height:20px;font-weight:400;color:#1b1b1b;">Unknown</div>
<div class="a " style="left:311px;top:818px;width:1103px;height:3px;background:linear-gradient(#ebebeb 0 1px,#dcdcdc 1px 2px,#f7f7f7 2px 3px)"></div>
<svg class="a" style="left:312px;top:838px" width="12" height="10" viewBox="0 0 12 10"><g transform="translate(0.00 0.40) scale(1.0000 1.0000)"><path d="M0.9 1.3 L5.5 5.9 L10.1 1.3" fill="none" stroke="#0a4fcf" stroke-width="2.5"/></g></svg>
<div class="t" style="left:326.5px;top:833px;font-size:12.2px;line-height:20px;font-weight:400;color:#0a4fcf;">Show person remarks</div>
<div class="t" style="left:311.6px;top:857px;font-size:12.15px;line-height:20px;font-weight:400;color:#1b1b1b;">No remarks</div>
<svg class="a" style="left:312px;top:900px" width="12" height="10" viewBox="0 0 12 10"><g transform="translate(0.00 0.50) scale(1.0000 1.0000)"><path d="M0.9 1.3 L5.5 5.9 L10.1 1.3" fill="none" stroke="#0a4fcf" stroke-width="2.5"/></g></svg>
<div class="t" style="left:326.5px;top:895px;font-size:12.15px;line-height:20px;font-weight:400;color:#0a4fcf;">Show file documentation notes</div>
<div class="t" style="left:311.6px;top:919px;font-size:12.15px;line-height:20px;font-weight:400;color:#1b1b1b;">No notes</div>
<div class="a " style="left:298.7px;top:987.3px;width:87.9px;height:30.5px;border:1px solid #2463d6;border-radius:3.5px;background:#fff;color:#0a4fcf;font-size:12.2px;line-height:28.5px;text-align:center">Add Another</div>
<div class="a " style="left:396px;top:987.3px;width:81.3px;height:30.5px;border:1px solid #2463d6;border-radius:3.5px;background:#fff;color:#0a4fcf;font-size:12.2px;line-height:28.5px;text-align:center">Clear Page</div>
<div class="a " style="left:486.2px;top:987.3px;width:55.6px;height:30.5px;border:1px solid #2463d6;border-radius:3.5px;background:#fff;color:#0a4fcf;font-size:12.2px;line-height:28.5px;text-align:center">Delete</div>
<div class="a " style="left:13.8px;top:1024px;width:53.2px;height:30.4px;border:1px solid #2463d6;border-radius:3.5px;background:#0a4fcf;color:#fff;font-size:12.2px;line-height:28.4px;text-align:center">Next</div>
<div class="a " style="left:76px;top:1024px;width:67.8px;height:30.4px;border:1px solid #2463d6;border-radius:3.5px;background:#fff;color:#0a4fcf;font-size:12.2px;line-height:28.4px;text-align:center">Previous</div>
<div class="a " style="left:152.8px;top:1024px;width:83.2px;height:30.4px;border:1px solid #2463d6;border-radius:3.5px;background:#fff;color:#0a4fcf;font-size:12.2px;line-height:28.4px;text-align:center">Save &amp; Exit</div>
</div></body></html>
